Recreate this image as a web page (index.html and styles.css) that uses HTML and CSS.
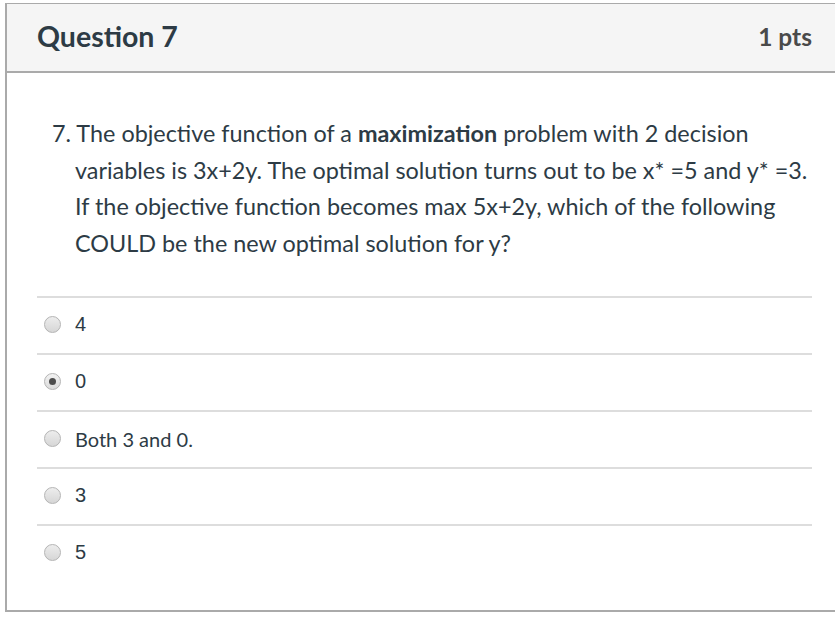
FILE: index.html
```html
<!DOCTYPE html>
<html lang="en">
<head>
<meta charset="utf-8">
<title>Question 7</title>
<link rel="stylesheet" href="styles.css">
</head>
<body>
<div class="question">
  <div class="header">
    <span class="title">Question 7</span>
    <span class="points">1 pts</span>
  </div>
  <div class="content">
    <p class="text">7. The objective function of a <strong>maximization</strong> problem with 2 decision variables is 3x+2y. The optimal solution turns out to be x* =5 and y* =3. If the objective function becomes max 5x+2y, which of the following COULD be the new optimal solution for y?</p>
    <div class="answers">
      <label class="answer"><span class="radio"></span><span class="label num">4</span></label>
      <label class="answer"><span class="radio checked"></span><span class="label num">0</span></label>
      <label class="answer"><span class="radio"></span><span class="label">Both 3 and 0.</span></label>
      <label class="answer"><span class="radio"></span><span class="label num">3</span></label>
      <label class="answer"><span class="radio"></span><span class="label num">5</span></label>
    </div>
  </div>
</div>
</body>
</html>
```

FILE: styles.css
```css
html, body {
  margin: 0;
  padding: 0;
  background: #ffffff;
}

body {
  font-family: Lato, "Open Sans", sans-serif;
  color: #2d3b45;
  overflow: hidden;
}

.question {
  margin: 3px -10px 0 5px;
  border-top: 1px solid #aaaaaa;
  border-left: 2px solid #aaaaaa;
  border-bottom: 2px solid #aaaaaa;
  border-right: 2px solid #aaaaaa;
}

.header {
  display: flex;
  justify-content: space-between;
  align-items: center;
  box-sizing: border-box;
  height: 69px;
  padding: 0 31px 3px 30px;
  background: #f5f5f5;
  border-bottom: 2px solid #aaaaaa;
}

.title {
  font-weight: bold;
  font-size: 28.5px;
  color: #2d3b45;
}

.points {
  font-weight: bold;
  font-size: 24.5px;
  color: #4a4a4a;
}

.content {
  padding: 42px 31px 29px 30px;
}

.text {
  margin: 0 0 35px 0;
  padding-left: 38px;
  text-indent: -23px;
  font-size: 23.4px;
  line-height: 36.5px;
}

.text strong {
  font-weight: bold;
}

.answers {
  display: flex;
  flex-direction: column;
}

.answer {
  display: flex;
  align-items: center;
  box-sizing: border-box;
  height: 57px;
  padding: 0 0 2px 7px;
  border-top: 2px solid #dddddd;
}

.radio {
  box-sizing: border-box;
  width: 17px;
  height: 17px;
  border-radius: 50%;
  border: 1px solid #b4b4b4;
  background: linear-gradient(#ededed, #d6d6d6);
  display: flex;
  align-items: center;
  justify-content: center;
  margin-right: 14px;
  flex: none;
}

.radio.checked {
  background: linear-gradient(#f2f2f2, #dcdcdc);
}

.radio.checked::after {
  content: "";
  width: 7px;
  height: 7px;
  border-radius: 50%;
  background: #4d4d4d;
}

.label {
  font-size: 20px;
  color: #2d3b45;
}

.label.num {
  font-family: "Liberation Sans", Arial, sans-serif;
}
```
